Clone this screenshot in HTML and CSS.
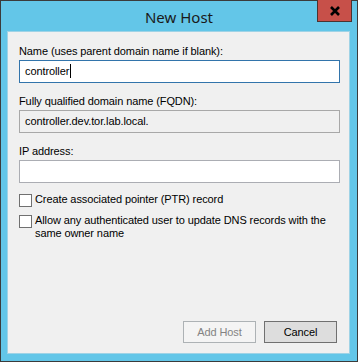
FILE: index.html
```html
<!DOCTYPE html>
<html lang="en">
<head>
    <meta charset="UTF-8">
    <title>New Host</title>
    <link rel="stylesheet" href="styles.css">
</head>
<body>
    <div class="window">
        <div class="titlebar">
            <span class="title">New Host</span>
            <span class="close-btn">
                <svg width="12" height="10" viewBox="0 0 12 10">
                    <path d="M2 1 L10 9 M10 1 L2 9" stroke="#000" stroke-width="2.6" fill="none"/>
                </svg>
            </span>
        </div>

        <div class="client">
            <label class="field-label">Name (uses parent domain name if blank):</label>
            <div class="textbox focused">controller<span class="caret"></span></div>

            <label class="field-label">Fully qualified domain name (FQDN):</label>
            <div class="textbox readonly">controller.dev.tor.lab.local.</div>

            <label class="field-label">IP address:</label>
            <div class="textbox"></div>

            <div class="check-row first">
                <span class="checkbox"></span>
                <span class="check-text">Create associated pointer (PTR) record</span>
            </div>
            <div class="check-row">
                <span class="checkbox"></span>
                <span class="check-text">Allow any authenticated user to update DNS records with the same owner name</span>
            </div>

            <div class="buttons">
                <span class="btn disabled">Add Host</span>
                <span class="btn default">Cancel</span>
            </div>
        </div>
    </div>
</body>
</html>
```

FILE: styles.css
```css
body {
    margin: 0;
    font-family: "Liberation Sans", Arial, sans-serif;
    font-size: 11px;
    letter-spacing: -0.1px;
    color: #000;
    background: #fff;
}

.window {
    width: 358px;
    height: 362px;
    box-sizing: border-box;
    border: 1px solid #3b3b3b;
    background: #63c6e8;
    display: flex;
    flex-direction: column;
}

.titlebar {
    position: relative;
    height: 30px;
    display: flex;
    justify-content: center;
    align-items: center;
}

.title {
    font-family: "Noto Sans", sans-serif;
    font-size: 15px;
    letter-spacing: 0;
    color: #1a1a1a;
    margin-top: 1px;
}

.close-btn {
    position: absolute;
    top: -1px;
    right: 5px;
    width: 33px;
    height: 21px;
    background: #c75049;
    border: 1px solid #4b3330;
    border-top: none;
    display: flex;
    justify-content: center;
    align-items: center;
}

.client {
    flex: 1;
    margin: 0 7px 7px 6px;
    background: #f0f0f0;
    border: 1px solid #9fd3e6;
    padding: 12px 9px 10px 11px;
    display: flex;
    flex-direction: column;
}

.field-label {
    display: block;
    line-height: 15px;
    margin-bottom: 1px;
}

.textbox {
    height: 21px;
    line-height: 21px;
    border: 1px solid #abadb3;
    background: #fff;
    padding: 0 5px;
    margin-bottom: 11px;
    white-space: nowrap;
}

.textbox.focused {
    border-color: #3274ab;
}

.textbox.readonly {
    background: #f0f0f0;
    border-color: #a8a8a8;
}

.caret {
    display: inline-block;
    width: 1px;
    height: 14px;
    background: #000;
    vertical-align: -3px;
    margin-left: 1px;
}

.check-row {
    display: flex;
    align-items: flex-start;
    gap: 3px;
    margin-bottom: 7px;
}

.check-row.first {
    margin-top: -1px;
}

.checkbox {
    flex: none;
    width: 11px;
    height: 11px;
    border: 1px solid #707070;
    background: #fff;
    margin-top: 1px;
}

.check-text {
    line-height: 13px;
}

.buttons {
    margin-top: auto;
    display: flex;
    justify-content: flex-end;
    gap: 8px;
    padding-right: 3px;
}

.btn {
    width: 71px;
    height: 20px;
    line-height: 20px;
    text-align: center;
    border: 1px solid #707070;
    background: #dddddd;
}

.btn.disabled {
    border-color: #adb2b5;
    background: #f4f4f4;
    color: #838383;
}
```
